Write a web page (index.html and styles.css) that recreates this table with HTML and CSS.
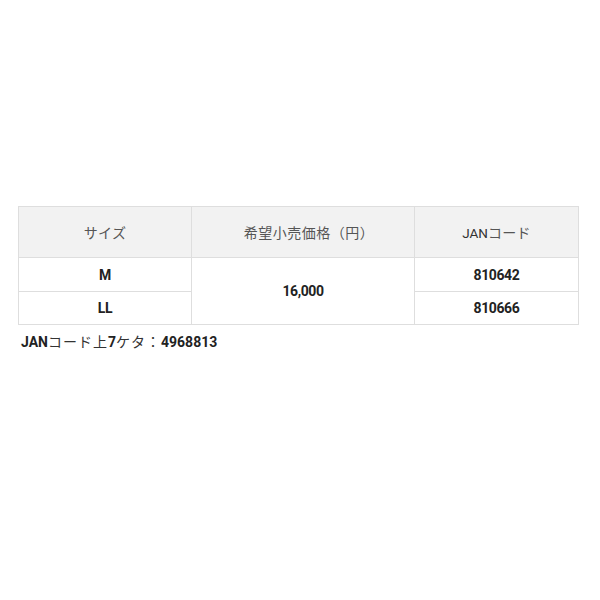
FILE: index.html
```html
<!DOCTYPE html>
<html lang="ja">
<head>
<meta charset="utf-8">
<link rel="stylesheet" href="styles.css">
</head>
<body>
<div class="page">
  <table class="spec">
    <thead>
      <tr>
        <th class="c1"><span class="ja">サイズ</span></th>
        <th class="c2"><span class="ja price">希望小売価格（円）</span></th>
        <th class="c3">JAN<span class="ja">コード</span></th>
      </tr>
    </thead>
    <tbody>
      <tr>
        <td>M</td>
        <td rowspan="2">16,000</td>
        <td>810642</td>
      </tr>
      <tr>
        <td>LL</td>
        <td>810666</td>
      </tr>
    </tbody>
  </table>
  <p class="note">JAN<span class="ja">コード上</span>7<span class="ja">ケタ：</span>4968813</p>
</div>
</body>
</html>
```
FILE: styles.css
```css
html, body {
  margin: 0;
  padding: 0;
  background: #fff;
}
.page {
  padding: 206px 22px 0 18px;
  font-family: Roboto, "Noto Sans CJK JP", sans-serif;
  color: #222;
}
.spec {
  width: 557px;
  border-collapse: collapse;
  table-layout: fixed;
  font-size: 14px;
}
.spec th, .spec td {
  border: 1px solid #dedede;
  text-align: center;
  vertical-align: middle;
  padding: 0;
}
.spec th {
  background: #f2f2f2;
  font-weight: normal;
  color: #333;
  height: 50px;
  font-size: 13.5px;
}
.spec th .ja {
  color: #555;
  font-size: 14px;
  letter-spacing: 0.3px;
}
.spec th .price {
  padding-left: 12px;
  letter-spacing: 0.5px;
}
.spec td {
  font-weight: bold;
  color: #222;
  height: 33px;
  letter-spacing: -0.4px;
}
.spec tbody tr:last-child td {
  height: 32px;
}
.c1 { width: 172px; }
.c2 { width: 222px; }
.c3 { width: 163px; }
.note {
  margin: 7px 0 0 3px;
  font-size: 14px;
  font-weight: bold;
  color: #222;
  line-height: 20px;
}
.note .ja {
  font-weight: normal;
  color: #333;
  letter-spacing: 1px;
}
```
